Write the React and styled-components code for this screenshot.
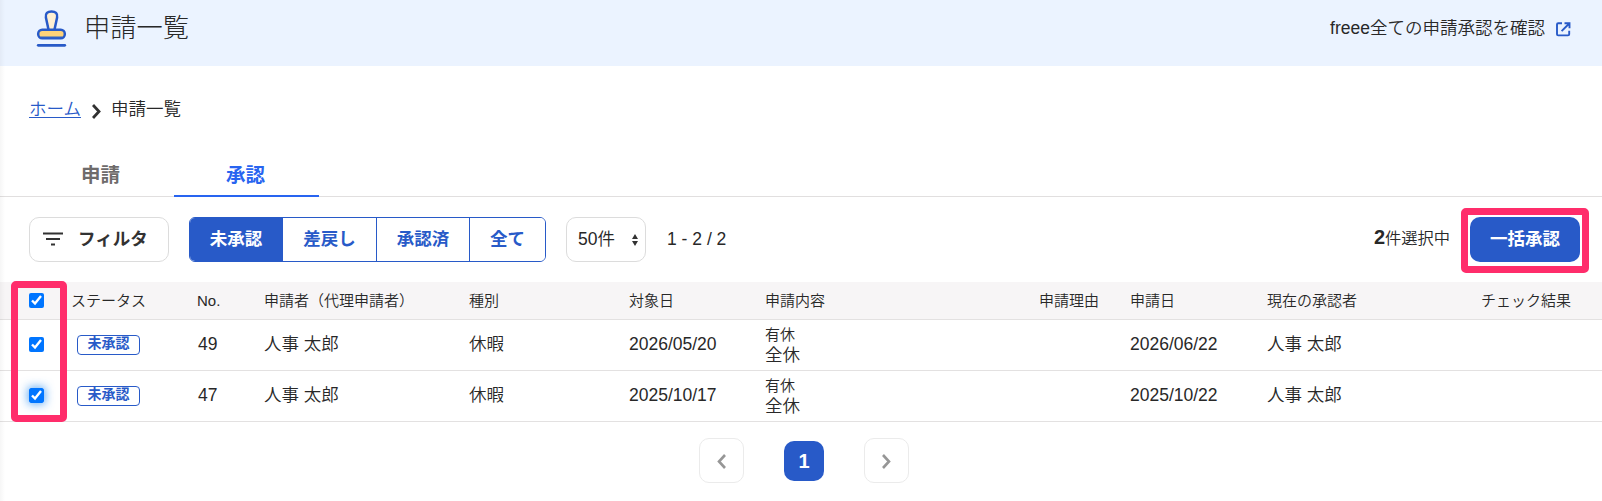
import React from "react";
import styled, { createGlobalStyle, css } from "styled-components";

const GlobalStyle = createGlobalStyle`
  * {
    box-sizing: border-box;
  }

  body {
    margin: 0;
    background: #fff;
    color: #282828;
    font-family: "Liberation Sans", "Noto Sans CJK JP", sans-serif;
    font-size: 17.5px;
    font-weight: 350;
    line-height: 24px;
    overflow: hidden;
  }

  button {
    font-family: inherit;
    margin: 0;
  }
`;

const Page = styled.div`
  position: relative;
  width: 1602px;
  height: 501px;
  overflow: hidden;

  /* shadow cast by the side navigation */
  &::before {
    content: "";
    position: absolute;
    inset: 0 auto 0 0;
    width: 5px;
    background: linear-gradient(to right, rgba(0, 0, 0, 0.035), rgba(0, 0, 0, 0));
  }
`;

const Header = styled.header`
  display: flex;
  align-items: center;
  height: 66px;
  padding: 0 30px 11px 36px;
  background: #ebf3ff;
`;

const StampIcon = styled.svg`
  flex: none;
  width: 31px;
  height: 40px;
  margin-top: 3px;
`;

const Title = styled.h1`
  flex: 1;
  margin: 0 0 0 17px;
  font-size: 26.25px;
  font-weight: 300;
`;

const HeaderLink = styled.a`
  display: flex;
  align-items: center;
  gap: 10px;
  color: #282828;

  svg {
    margin-top: 3px;
  }
`;

const Breadcrumb = styled.nav`
  display: flex;
  align-items: center;
  height: 86px;
  padding-left: 29px;

  a {
    color: #285ac8;
    text-decoration: underline;
    text-underline-offset: 2px;
    text-decoration-thickness: 1px;
  }

  svg {
    margin: 4px 10px 0 11px;
  }
`;

const Tabs = styled.div`
  display: flex;
  height: 45px;
  padding-left: 29px;
  border-bottom: 1px solid #e1dfdf;
`;

const Tab = styled.button`
  width: 145px;
  height: 45px;
  padding: 0 2px 0 0;
  border: 0;
  border-bottom: 2px solid ${({ $active }) => ($active ? "#2864f0" : "transparent")};
  background: none;
  color: ${({ $active }) => ($active ? "#2864f0" : "#6e6b6b")};
  font-size: 19.5px;
  font-weight: 700;
`;

const Toolbar = styled.div`
  display: flex;
  align-items: center;
  height: 85px;
  padding: 0 22px 0 29px;
`;

const FilterButton = styled.button`
  display: flex;
  align-items: center;
  gap: 15px;
  width: 140px;
  height: 45px;
  padding: 0 0 1px 13px;
  border: 1px solid #dcdcdc;
  border-radius: 10px;
  background: #fff;
  color: #323232;
  font-size: 17.5px;
  font-weight: 700;

  span {
    padding-bottom: 3px;
  }
`;

const Segments = styled.div`
  display: flex;
  height: 45px;
  margin-left: 20px;
  border: 1px solid #285ac8;
  border-radius: 6px;
  overflow: hidden;
`;

const Segment = styled.button`
  width: ${({ $width }) => $width}px;
  padding: 0 0 5px;
  border: 0;
  border-left: ${({ $first }) => ($first ? "0" : "1px solid #285ac8")};
  background: ${({ $active }) => ($active ? "#285ac8" : "#fff")};
  color: ${({ $active }) => ($active ? "#fff" : "#285ac8")};
  font-size: 17.5px;
  font-weight: 700;
`;

const PerPage = styled.div`
  display: flex;
  align-items: center;
  justify-content: space-between;
  width: 80px;
  height: 45px;
  margin: 0 21px 0 20px;
  padding: 0 7px 2px 11px;
  border: 1px solid #dcdcdc;
  border-radius: 10px;

  svg {
    margin-top: 3px;
  }
`;

const Range = styled.span`
  flex: 1;
  padding-bottom: 2px;
`;

const Selected = styled.span`
  margin-right: 20px;
  padding-bottom: 4px;
  font-size: 16.25px;

  strong {
    font-size: 20px;
    font-weight: 700;
  }
`;

const ApproveButton = styled.button`
  width: 110px;
  height: 45px;
  padding: 0 0 5px;
  border: 0;
  border-radius: 10px;
  background: #285ac8;
  color: #fff;
  font-size: 17.5px;
  font-weight: 700;
`;

const columns = css`
  display: grid;
  grid-template-columns: 42px 126px 67px 205px 160px 136px 274px 91px 137px 214px 1fr;
  align-items: center;
  padding-left: 29px;
  border-bottom: 1px solid #e3e1e1;
`;

const TableHead = styled.div`
  ${columns}
  height: 38px;
  background: #f7f5f6;
  font-size: 15px;
  white-space: nowrap;
`;

const TableRow = styled.div`
  ${columns}
  height: 51px;
`;

const Cell = styled.div`
  padding-left: ${({ $indent }) => $indent || 0}px;
  padding-bottom: ${({ $head }) => ($head ? 0 : 3)}px;
  white-space: nowrap;
`;

const Check = styled.input.attrs({ type: "checkbox" })`
  display: block;
  width: 15px;
  height: 15px;
  margin: 0 0 1px;
  border-radius: 3px;
  accent-color: #0075ff;
  box-shadow: ${({ $focused }) => ($focused ? "0 0 10px 1px rgba(40, 140, 240, 0.75)" : "none")};
`;

const Status = styled.span`
  display: block;
  width: 63px;
  height: 20px;
  margin-left: 6px;
  border: 1px solid #285ac8;
  border-radius: 4px;
  color: #285ac8;
  font-size: 14px;
  font-weight: 700;
  line-height: 15px;
  text-align: center;
`;

const Content = styled.div`
  line-height: 20px;

  small {
    display: block;
    font-size: 15px;
  }
`;

const Pagination = styled.div`
  display: flex;
  align-items: center;
  justify-content: center;
  gap: 40px;
  padding: 16px 0 0 6px;
`;

const PageArrow = styled.button`
  display: grid;
  place-items: center;
  width: 45px;
  height: 45px;
  padding: 1px 0 0;
  border: 1px solid #ebebeb;
  border-radius: 10px;
  background: #fff;
`;

const PageNumber = styled.span`
  width: 40px;
  height: 40px;
  border-radius: 10px;
  background: #285ac8;
  color: #fff;
  font-size: 20px;
  font-weight: 700;
  line-height: 40px;
  text-align: center;
`;

/* callout frames drawn over the page */
const Highlight = styled.div`
  position: absolute;
  top: ${({ $top }) => $top}px;
  left: ${({ $left }) => $left}px;
  width: ${({ $width }) => $width}px;
  height: ${({ $height }) => $height}px;
  border: 7px solid #ff2d6b;
  border-radius: 5px;
  pointer-events: none;
`;

const Chevron = ({ left, color, strokeWidth = 2.6 }) => (
  <svg width="9" height="15" viewBox="0 0 9 15" fill="none" stroke={color} strokeWidth={strokeWidth}>
    <path d={left ? "M8 1 2 7.5 8 14" : "M1 1 7 7.5 1 14"} />
  </svg>
);

const headings = [
  "ステータス", "No.", "申請者（代理申請者）", "種別", "対象日", "申請内容",
  "申請理由", "申請日", "現在の承認者", "チェック結果",
];

const filters = [
  { label: "未承認", width: 92, active: true },
  { label: "差戻し", width: 94 },
  { label: "承認済", width: 93 },
  { label: "全て", width: 76 },
];

const requests = [
  { no: 49, target: "2026/05/20", applied: "2026/06/22" },
  { no: 47, target: "2025/10/17", applied: "2025/10/22", focused: true },
];

export default function App() {
  return (
    <Page>
      <GlobalStyle />
      <Header>
        <StampIcon viewBox="0 0 31 40" fill="none" stroke="#285ac8" strokeWidth="2.5">
          <path
            d="M12.6 21 9.9 8.5C9.1 4.5 11.6 2.4 15.5 2.4s6.4 2.1 5.6 6.1L18.4 21"
            fill="#fff0d2"
          />
          <rect x="2.2" y="20.7" width="26.6" height="8.6" rx="4" fill="#ffd278" />
          <path d="M4.5 27.6h22" stroke="#8c96a0" strokeWidth="1" />
          <path d="M2.2 36.3h26.6" strokeWidth="2.7" strokeLinecap="round" />
        </StampIcon>
        <Title>申請一覧</Title>
        <HeaderLink>
          freee全ての申請承認を確認
          <svg width="17" height="17" viewBox="0 0 17 17" fill="none" stroke="#285ac8" strokeWidth="1.9">
            <path d="M7 2.2H3.2Q2 2.2 2 3.4v9.8q0 1.2 1.2 1.2H13q1.2 0 1.2-1.2V9.8" />
            <path d="M9.5 2.2h5v5M14.2 2.5 6.6 10.1" />
          </svg>
        </HeaderLink>
      </Header>

      <Breadcrumb>
        <a>ホーム</a>
        <Chevron color="#323232" strokeWidth={2.8} />
        <span>申請一覧</span>
      </Breadcrumb>

      <Tabs>
        <Tab>申請</Tab>
        <Tab $active>承認</Tab>
      </Tabs>

      <Toolbar>
        <FilterButton>
          <svg width="20" height="14" viewBox="0 0 20 14" stroke="#323232" strokeWidth="2.2">
            <path d="M0 1.5h20M3 7h14M8 12.5h4" />
          </svg>
          <span>フィルタ</span>
        </FilterButton>
        <Segments>
          {filters.map(({ label, width, active }, i) => (
            <Segment key={label} $width={width} $active={active} $first={i === 0}>
              {label}
            </Segment>
          ))}
        </Segments>
        <PerPage>
          50件
          <svg width="6" height="12" viewBox="0 0 6 12" fill="#323232">
            <path d="M3 0 6 5H0ZM3 12 0 7h6Z" />
          </svg>
        </PerPage>
        <Range>1 - 2 / 2</Range>
        <Selected>
          <strong>2</strong>件選択中
        </Selected>
        <ApproveButton>一括承認</ApproveButton>
      </Toolbar>

      <TableHead>
        <Check defaultChecked />
        {headings.map((heading) => (
          <Cell key={heading} $head>{heading}</Cell>
        ))}
      </TableHead>
      {requests.map(({ no, target, applied, focused }) => (
        <TableRow key={no}>
          <Check defaultChecked $focused={focused} />
          <Status>未承認</Status>
          <Cell $indent={1}>{no}</Cell>
          <Cell>人事 太郎</Cell>
          <Cell>休暇</Cell>
          <Cell>{target}</Cell>
          <Content>
            <small>有休</small>
            全休
          </Content>
          <Cell />
          <Cell>{applied}</Cell>
          <Cell>人事 太郎</Cell>
          <Cell />
        </TableRow>
      ))}

      <Pagination>
        <PageArrow>
          <Chevron left color="#969696" />
        </PageArrow>
        <PageNumber>1</PageNumber>
        <PageArrow>
          <Chevron color="#969696" />
        </PageArrow>
      </Pagination>

      <Highlight $top={281} $left={11} $width={56} $height={141} />
      <Highlight $top={208} $left={1461} $width={128} $height={65} />
    </Page>
  );
}
